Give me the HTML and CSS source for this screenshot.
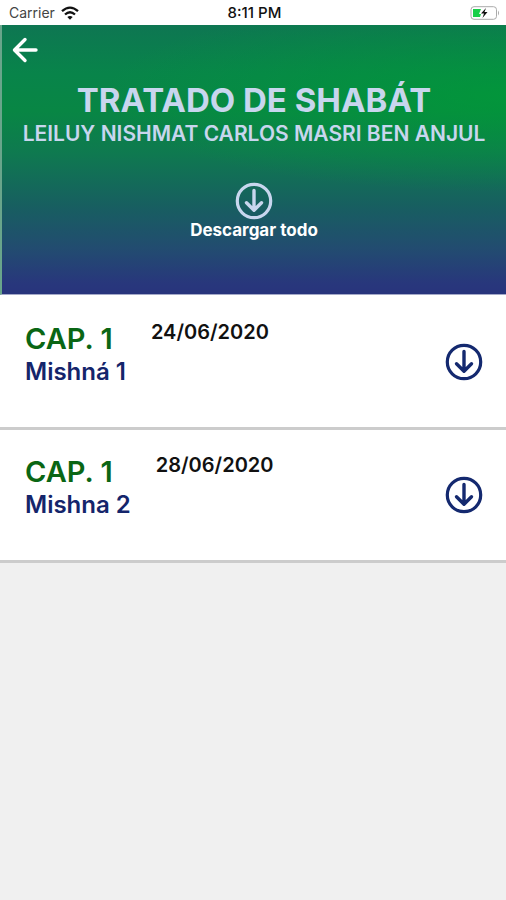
FILE: index.html
```html
<!DOCTYPE html>
<html lang="es">
<head>
<meta charset="utf-8">
<meta name="viewport" content="width=device-width, initial-scale=1">
<title>Tratado de Shabát</title>
<link rel="stylesheet" href="styles.css">
</head>
<body>
<svg class="symbols" aria-hidden="true">
  <symbol id="download" viewBox="0 0 38 38">
    <circle cx="19" cy="19" r="16.7" fill="none" stroke="currentColor" stroke-width="3.2"/>
    <path d="M19 8.500v19.500M11.500 20.800L19 28.200l7.500-7.400" fill="none" stroke="currentColor" stroke-width="3.400" stroke-linecap="round" stroke-linejoin="round"/>
  </symbol>
</svg>
<div class="status">
  <div class="carrier">
    <span>Carrier</span>
    <svg class="wifi" viewBox="0 0 18 14" aria-hidden="true">
      <path d="M1 5.200Q9-2 17 5.200M4 8.500Q9 4 14 8.500" fill="none" stroke="#111" stroke-width="2.300"/>
      <path d="M6.300 11Q9 8.800 11.700 11L9 13.700Z" fill="#111"/>
    </svg>
  </div>
  <time class="clock">8:11 PM</time>
  <svg class="battery" viewBox="0 0 30 14" aria-hidden="true">
    <rect x="1" y=".7" width="25.500" height="12.600" rx="3" fill="#fff" stroke="#aaa"/>
    <path d="M28 4.500q2 2.500 0 5z" fill="#aaa"/>
    <path d="M3 3h8l-2 5h2l-1 3H3z" fill="#19cf49"/>
    <path d="M16 2l-5 5.500h3l-1.500 4.500 5-6h-3z" fill="#111"/>
  </svg>
</div>
<header class="hero">
  <button class="back" aria-label="Volver">
    <svg viewBox="0 0 26 26" aria-hidden="true"><path d="M24 13H3M13 2.500L2.500 13 13 23.500" fill="none" stroke="currentColor" stroke-width="3.400" stroke-linecap="round" stroke-linejoin="round"/></svg>
  </button>
  <h1 class="title">TRATADO DE SHABÁT</h1>
  <p class="subtitle">LEILUY NISHMAT CARLOS MASRI BEN ANJUL</p>
  <button class="download-all">
    <svg class="icon" aria-hidden="true"><use href="#download"/></svg>
    <span>Descargar todo</span>
  </button>
</header>
<main>
  <ul class="list">
    <li class="item">
      <div class="lesson">
        <h2 class="chapter">CAP. 1</h2>
        <p class="mishna">Mishná 1</p>
      </div>
      <time class="date" datetime="2020-06-24">24/06/2020</time>
      <button class="download" aria-label="Descargar Mishná 1"><svg class="icon" aria-hidden="true"><use href="#download"/></svg></button>
    </li>
    <li class="item">
      <div class="lesson">
        <h2 class="chapter">CAP. 1</h2>
        <p class="mishna">Mishna 2</p>
      </div>
      <time class="date" datetime="2020-06-28">28/06/2020</time>
      <button class="download" aria-label="Descargar Mishna 2"><svg class="icon" aria-hidden="true"><use href="#download"/></svg></button>
    </li>
  </ul>
</main>
</body>
</html>
```
FILE: styles.css
```css
* {
  box-sizing: border-box;
}

body {
  margin: 0;
  min-height: 100vh;
  background: #f0f0f0;
  color: #111;
  font-family: Inter, "Liberation Sans", sans-serif;
}

h1, h2, p, ul {
  margin: 0;
  padding: 0;
}

button {
  padding: 0;
  border: 0;
  background: none;
  font: inherit;
  cursor: pointer;
}

svg {
  display: block;
}

.symbols {
  display: none;
}

.status {
  display: grid;
  grid-template-columns: 1fr auto 1fr;
  align-items: center;
  height: 25px;
  padding: 0 6px 0 9px;
  background: #fff;
  font-size: 14px;
}

.carrier {
  display: flex;
  align-items: center;
  gap: 6px;
  color: #444;
}

.wifi {
  width: 18px;
  height: 14px;
}

.clock {
  font-size: 15px;
  font-weight: 500;
}

.battery {
  justify-self: end;
  width: 30px;
  height: 14px;
}

.hero {
  display: flex;
  flex-direction: column;
  align-items: center;
  padding-bottom: 54px;
  border-left: 2px solid #69a58b;
  border-bottom: 1px solid #a4a9c8;
  background:
    radial-gradient(ellipse 80% 36% at 100% 26%, rgba(0, 156, 54, 0.7), rgba(0, 156, 54, 0)),
    linear-gradient(180deg, #0e7652 0%, #08844a 18%, #088644 32%, #0f7950 48%, #175f60 67%, #224c70 83%, #28377c 96%, #28347c 100%);
  text-align: center;
}

.back {
  align-self: flex-start;
  padding: 12px 10px;
  color: #fff;
}

.back svg {
  width: 26px;
  height: 26px;
}

.title {
  margin-top: 5px;
  color: #c8d6ee;
  font-size: 33px;
  font-weight: 700;
  line-height: 40px;
}

.subtitle {
  color: #c8d6ee;
  font-size: 21px;
  font-weight: 600;
  line-height: 27px;
}

.icon {
  width: 38px;
  height: 38px;
}

.download-all {
  display: flex;
  flex-direction: column;
  align-items: center;
  margin-top: 35px;
  color: #fff;
  font-size: 17px;
  font-weight: 700;
  line-height: 20px;
}

.download-all .icon {
  color: #c8d6ee;
}

.list {
  padding-top: 2px;
  background: #fff;
  list-style: none;
}

.item {
  display: flex;
  align-items: center;
  min-height: 133px;
  padding: 0 23px 0 25px;
  border-bottom: 3px solid #ccc;
}

.lesson {
  align-self: flex-start;
  padding-top: 24px;
}

.chapter {
  color: #0a6614;
  font-size: 29px;
  font-weight: 600;
  line-height: 36px;
}

.mishna {
  color: #14256b;
  font-size: 24px;
  font-weight: 600;
  line-height: 30px;
}

.date {
  align-self: flex-start;
  margin-left: 25px;
  padding-top: 23px;
  font-size: 20px;
  font-weight: 600;
  line-height: 24px;
}

.download {
  margin-left: auto;
  color: #14296f;
}
```
